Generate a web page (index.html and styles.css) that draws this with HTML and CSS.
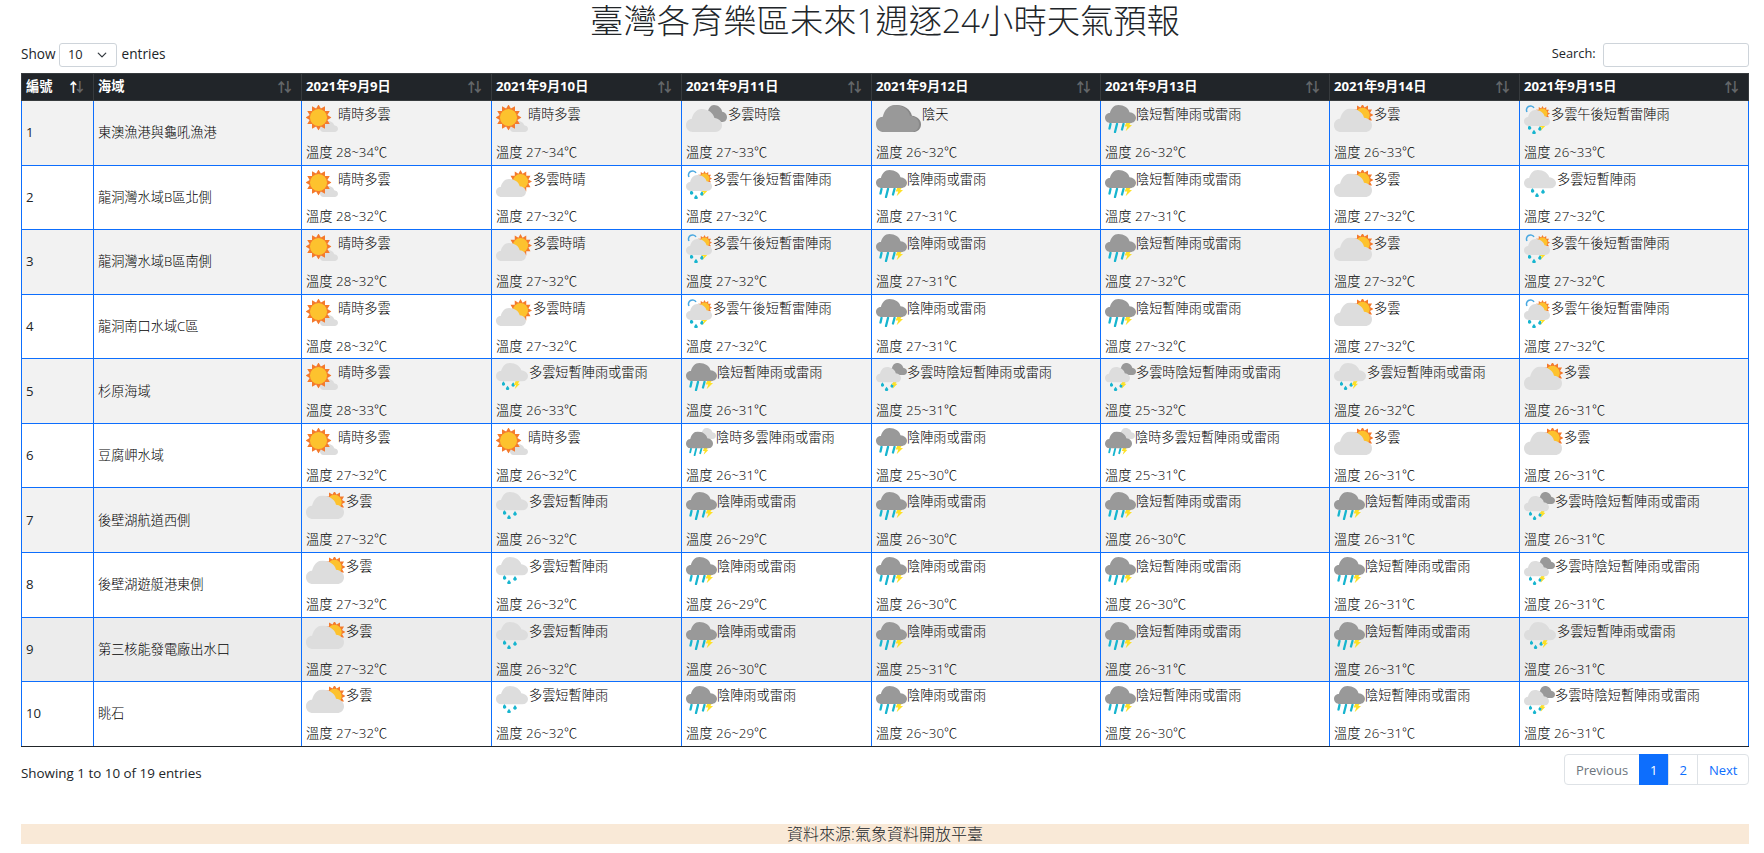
FILE: index.html
```html
<!DOCTYPE html>
<html lang="zh-Hant">
<head>
  <meta charset="UTF-8">
  <meta name="viewport" content="width=device-width, initial-scale=1.0">
  <title>臺灣各育樂區未來1週逐24小時天氣預報</title>
  <link rel="stylesheet" href="styles.css">
</head>
<body>
  <!-- weather icons, one symbol per forecast wording -->
  <svg class="sprite" xmlns="http://www.w3.org/2000/svg">
    <symbol id="cl" viewBox="0 0 38 24" preserveAspectRatio="none">
      <path d="M7 24C3 24 0 21 0 17C0 13 3 10.500 6 10.500C7.500 4.500 11 0 16.500 0C23 0 29 4 30 9.500C34.500 10 38 13 38 17C38 21 35 24 31 24Z"/>
    </symbol>
    <symbol id="star" viewBox="0 0 24 24">
      <polygon fill="#f47a2c" points="24,12 20.2,14.2 22.400,18 18,18 18,22.400 14.200,20.200 12,24 9.800,20.200 6,22.400 6,18 1.600,18 3.800,14.200 0,12 3.800,9.800 1.600,6 6,6 6,1.600 9.800,3.800 12,0 14.200,3.800 18,1.600 18,6 22.400,6 20.200,9.800"/>
      <circle cx="12" cy="12" r="7.900" fill="#fdc22e"/>
    </symbol>
    <symbol id="bolt" viewBox="0 0 8 9">
      <path fill="#fde026" d="M3 0H7.500L5.500 3H8L2 9L3.500 4.500H1Z"/>
    </symbol>
    <symbol id="streaks" viewBox="0 0 20 10">
      <path fill="none" stroke="#17b5cf" stroke-width="2.300" stroke-linecap="round" d="M2.500 1L1.500 5.500M9 1L7 9M15.500 1L14 6.500"/>
    </symbol>
    <symbol id="dots" viewBox="0 0 14 9">
      <g fill="#17b5cf">
        <path d="M1.500 0L3.200 2.400A1.800 1.800 0 1 1 -0.200 2.400Z"/>
        <path d="M6 4.800L7.700 7.200A1.800 1.800 0 1 1 4.300 7.200Z"/>
        <path d="M12 1L13.700 3.400A1.800 1.800 0 1 1 10.300 3.400Z"/>
      </g>
    </symbol>

    <symbol id="sun" viewBox="0 0 32 32">
      <use href="#cl" x="14" y="16" width="18" height="11" fill="#ddd"/>
      <use href="#star" x="-0.500" y="-0.500" width="26" height="26"/>
    </symbol>
    <symbol id="sunny-cloud" viewBox="0 0 37 32">
      <use href="#star" x="13" y="0" width="23" height="23"/>
      <use href="#cl" x="0" y="9" width="30" height="18" fill="#ddd"/>
    </symbol>
    <symbol id="cloud" viewBox="0 0 40 32">
      <use href="#star" x="17.500" y="-1" width="22" height="22"/>
      <use href="#cl" x="0" y="3.500" width="38" height="23.500" fill="#ddd"/>
    </symbol>
    <symbol id="cloud-over" viewBox="0 0 42 32">
      <use href="#cl" x="18" y="0" width="23" height="17" fill="#999"/>
      <use href="#cl" x="0" y="4" width="36" height="23" fill="#ddd"/>
    </symbol>
    <symbol id="over" viewBox="0 0 46 32">
      <use href="#cl" x="2" y="0" width="43" height="27" fill="#888"/>
      <use href="#cl" x="0" y="0" width="43" height="27" fill="#999"/>
    </symbol>
    <symbol id="rain" viewBox="0 0 31 32">
      <use href="#streaks" x="3" y="18" width="20" height="10"/>
      <use href="#bolt" x="18.500" y="16.500" width="8.500" height="10"/>
      <use href="#cl" x="0" y="0" width="31" height="18" fill="#999"/>
    </symbol>
    <symbol id="pm" viewBox="0 0 27 32">
      <path fill="none" stroke="#4aa8e0" stroke-width="1.500" d="M3 7A4 4 0 0 1 10 3"/>
      <use href="#star" x="11" y="1" width="15" height="15"/>
      <use href="#dots" x="4" y="20" width="14" height="9"/>
      <use href="#bolt" x="15" y="18" width="6.500" height="8"/>
      <use href="#cl" x="0" y="5" width="26" height="16" fill="#ddd"/>
    </symbol>
    <symbol id="shower" viewBox="0 0 33 32">
      <use href="#dots" x="7" y="18" width="14" height="9"/>
      <use href="#cl" x="0" y="0" width="32" height="18.500" fill="#ddd"/>
    </symbol>
    <symbol id="shower-t" viewBox="0 0 33 32">
      <use href="#dots" x="6" y="18" width="13" height="9"/>
      <use href="#bolt" x="17" y="17.500" width="7" height="9"/>
      <use href="#cl" x="0" y="0" width="32" height="18.500" fill="#ddd"/>
    </symbol>
    <symbol id="cloud-over-t" viewBox="0 0 31 32">
      <use href="#cl" x="13" y="0" width="18" height="12" fill="#999"/>
      <use href="#dots" x="5" y="19" width="13" height="9"/>
      <use href="#bolt" x="15" y="18" width="6.500" height="8"/>
      <use href="#cl" x="0" y="4" width="25" height="15.500" fill="#ddd"/>
    </symbol>
    <symbol id="over-cloud-t" viewBox="0 0 30 32">
      <use href="#cl" x="13" y="0" width="17" height="11" fill="#ddd"/>
      <use href="#streaks" x="3" y="20" width="16" height="8"/>
      <use href="#bolt" x="16" y="19" width="6.500" height="8"/>
      <use href="#cl" x="0" y="3.500" width="27" height="17" fill="#999"/>
    </symbol>
  </svg>

  <h1 class="page-title">臺灣各育樂區未來1週逐24小時天氣預報</h1>

  <div class="table-tools">
    <label class="length-box">Show <select class="length-select"><option>10</option></select> entries</label>
    <label class="search-box">Search: <input type="search" class="search-input"></label>
  </div>

  <table class="forecast">
    <colgroup>
      <col class="col-no"><col class="col-area">
      <col class="col-s"><col class="col-s"><col class="col-s">
      <col class="col-l"><col class="col-l">
      <col class="col-s"><col>
    </colgroup>
    <thead>
      <tr>
        <th class="sort-asc">編號</th>
        <th>海域</th>
        <th>2021年9月9日</th>
        <th>2021年9月10日</th>
        <th>2021年9月11日</th>
        <th>2021年9月12日</th>
        <th>2021年9月13日</th>
        <th>2021年9月14日</th>
        <th>2021年9月15日</th>
      </tr>
    </thead>
    <tbody>
      <tr class="odd">
        <td class="no">1</td><td>東澳漁港與龜吼漁港</td>
        <td><div class="wx"><svg class="ic w-sun"><use href="#sun"/></svg>晴時多雲</div><div class="tp">溫度 28~34℃</div></td>
        <td><div class="wx"><svg class="ic w-sun"><use href="#sun"/></svg>晴時多雲</div><div class="tp">溫度 27~34℃</div></td>
        <td><div class="wx"><svg class="ic w-cloud-over"><use href="#cloud-over"/></svg>多雲時陰</div><div class="tp">溫度 27~33℃</div></td>
        <td><div class="wx"><svg class="ic w-over"><use href="#over"/></svg>陰天</div><div class="tp">溫度 26~32℃</div></td>
        <td><div class="wx"><svg class="ic w-rain"><use href="#rain"/></svg>陰短暫陣雨或雷雨</div><div class="tp">溫度 26~32℃</div></td>
        <td><div class="wx"><svg class="ic w-cloud"><use href="#cloud"/></svg>多雲</div><div class="tp">溫度 26~33℃</div></td>
        <td><div class="wx"><svg class="ic w-pm"><use href="#pm"/></svg>多雲午後短暫雷陣雨</div><div class="tp">溫度 26~33℃</div></td>
      </tr>
      <tr>
        <td class="no">2</td><td>龍洞灣水域B區北側</td>
        <td><div class="wx"><svg class="ic w-sun"><use href="#sun"/></svg>晴時多雲</div><div class="tp">溫度 28~32℃</div></td>
        <td><div class="wx"><svg class="ic w-sunny-cloud"><use href="#sunny-cloud"/></svg>多雲時晴</div><div class="tp">溫度 27~32℃</div></td>
        <td><div class="wx"><svg class="ic w-pm"><use href="#pm"/></svg>多雲午後短暫雷陣雨</div><div class="tp">溫度 27~32℃</div></td>
        <td><div class="wx"><svg class="ic w-rain"><use href="#rain"/></svg>陰陣雨或雷雨</div><div class="tp">溫度 27~31℃</div></td>
        <td><div class="wx"><svg class="ic w-rain"><use href="#rain"/></svg>陰短暫陣雨或雷雨</div><div class="tp">溫度 27~31℃</div></td>
        <td><div class="wx"><svg class="ic w-cloud"><use href="#cloud"/></svg>多雲</div><div class="tp">溫度 27~32℃</div></td>
        <td><div class="wx"><svg class="ic w-shower"><use href="#shower"/></svg>多雲短暫陣雨</div><div class="tp">溫度 27~32℃</div></td>
      </tr>
      <tr class="odd">
        <td class="no">3</td><td>龍洞灣水域B區南側</td>
        <td><div class="wx"><svg class="ic w-sun"><use href="#sun"/></svg>晴時多雲</div><div class="tp">溫度 28~32℃</div></td>
        <td><div class="wx"><svg class="ic w-sunny-cloud"><use href="#sunny-cloud"/></svg>多雲時晴</div><div class="tp">溫度 27~32℃</div></td>
        <td><div class="wx"><svg class="ic w-pm"><use href="#pm"/></svg>多雲午後短暫雷陣雨</div><div class="tp">溫度 27~32℃</div></td>
        <td><div class="wx"><svg class="ic w-rain"><use href="#rain"/></svg>陰陣雨或雷雨</div><div class="tp">溫度 27~31℃</div></td>
        <td><div class="wx"><svg class="ic w-rain"><use href="#rain"/></svg>陰短暫陣雨或雷雨</div><div class="tp">溫度 27~32℃</div></td>
        <td><div class="wx"><svg class="ic w-cloud"><use href="#cloud"/></svg>多雲</div><div class="tp">溫度 27~32℃</div></td>
        <td><div class="wx"><svg class="ic w-pm"><use href="#pm"/></svg>多雲午後短暫雷陣雨</div><div class="tp">溫度 27~32℃</div></td>
      </tr>
      <tr>
        <td class="no">4</td><td>龍洞南口水域C區</td>
        <td><div class="wx"><svg class="ic w-sun"><use href="#sun"/></svg>晴時多雲</div><div class="tp">溫度 28~32℃</div></td>
        <td><div class="wx"><svg class="ic w-sunny-cloud"><use href="#sunny-cloud"/></svg>多雲時晴</div><div class="tp">溫度 27~32℃</div></td>
        <td><div class="wx"><svg class="ic w-pm"><use href="#pm"/></svg>多雲午後短暫雷陣雨</div><div class="tp">溫度 27~32℃</div></td>
        <td><div class="wx"><svg class="ic w-rain"><use href="#rain"/></svg>陰陣雨或雷雨</div><div class="tp">溫度 27~31℃</div></td>
        <td><div class="wx"><svg class="ic w-rain"><use href="#rain"/></svg>陰短暫陣雨或雷雨</div><div class="tp">溫度 27~32℃</div></td>
        <td><div class="wx"><svg class="ic w-cloud"><use href="#cloud"/></svg>多雲</div><div class="tp">溫度 27~32℃</div></td>
        <td><div class="wx"><svg class="ic w-pm"><use href="#pm"/></svg>多雲午後短暫雷陣雨</div><div class="tp">溫度 27~32℃</div></td>
      </tr>
      <tr class="odd">
        <td class="no">5</td><td>杉原海域</td>
        <td><div class="wx"><svg class="ic w-sun"><use href="#sun"/></svg>晴時多雲</div><div class="tp">溫度 28~33℃</div></td>
        <td><div class="wx"><svg class="ic w-shower"><use href="#shower-t"/></svg>多雲短暫陣雨或雷雨</div><div class="tp">溫度 26~33℃</div></td>
        <td><div class="wx"><svg class="ic w-rain"><use href="#rain"/></svg>陰短暫陣雨或雷雨</div><div class="tp">溫度 26~31℃</div></td>
        <td><div class="wx"><svg class="ic w-rain"><use href="#cloud-over-t"/></svg>多雲時陰短暫陣雨或雷雨</div><div class="tp">溫度 25~31℃</div></td>
        <td><div class="wx"><svg class="ic w-rain"><use href="#cloud-over-t"/></svg>多雲時陰短暫陣雨或雷雨</div><div class="tp">溫度 25~32℃</div></td>
        <td><div class="wx"><svg class="ic w-shower"><use href="#shower-t"/></svg>多雲短暫陣雨或雷雨</div><div class="tp">溫度 26~32℃</div></td>
        <td><div class="wx"><svg class="ic w-cloud"><use href="#cloud"/></svg>多雲</div><div class="tp">溫度 26~31℃</div></td>
      </tr>
      <tr>
        <td class="no">6</td><td>豆腐岬水域</td>
        <td><div class="wx"><svg class="ic w-sun"><use href="#sun"/></svg>晴時多雲</div><div class="tp">溫度 27~32℃</div></td>
        <td><div class="wx"><svg class="ic w-sun"><use href="#sun"/></svg>晴時多雲</div><div class="tp">溫度 26~32℃</div></td>
        <td><div class="wx"><svg class="ic w-over-cloud"><use href="#over-cloud-t"/></svg>陰時多雲陣雨或雷雨</div><div class="tp">溫度 26~31℃</div></td>
        <td><div class="wx"><svg class="ic w-rain"><use href="#rain"/></svg>陰陣雨或雷雨</div><div class="tp">溫度 25~30℃</div></td>
        <td><div class="wx"><svg class="ic w-over-cloud"><use href="#over-cloud-t"/></svg>陰時多雲短暫陣雨或雷雨</div><div class="tp">溫度 25~31℃</div></td>
        <td><div class="wx"><svg class="ic w-cloud"><use href="#cloud"/></svg>多雲</div><div class="tp">溫度 26~31℃</div></td>
        <td><div class="wx"><svg class="ic w-cloud"><use href="#cloud"/></svg>多雲</div><div class="tp">溫度 26~31℃</div></td>
      </tr>
      <tr class="odd">
        <td class="no">7</td><td>後壁湖航道西側</td>
        <td><div class="wx"><svg class="ic w-cloud"><use href="#cloud"/></svg>多雲</div><div class="tp">溫度 27~32℃</div></td>
        <td><div class="wx"><svg class="ic w-shower"><use href="#shower"/></svg>多雲短暫陣雨</div><div class="tp">溫度 26~32℃</div></td>
        <td><div class="wx"><svg class="ic w-rain"><use href="#rain"/></svg>陰陣雨或雷雨</div><div class="tp">溫度 26~29℃</div></td>
        <td><div class="wx"><svg class="ic w-rain"><use href="#rain"/></svg>陰陣雨或雷雨</div><div class="tp">溫度 26~30℃</div></td>
        <td><div class="wx"><svg class="ic w-rain"><use href="#rain"/></svg>陰短暫陣雨或雷雨</div><div class="tp">溫度 26~30℃</div></td>
        <td><div class="wx"><svg class="ic w-rain"><use href="#rain"/></svg>陰短暫陣雨或雷雨</div><div class="tp">溫度 26~31℃</div></td>
        <td><div class="wx"><svg class="ic w-rain"><use href="#cloud-over-t"/></svg>多雲時陰短暫陣雨或雷雨</div><div class="tp">溫度 26~31℃</div></td>
      </tr>
      <tr>
        <td class="no">8</td><td>後壁湖遊艇港東側</td>
        <td><div class="wx"><svg class="ic w-cloud"><use href="#cloud"/></svg>多雲</div><div class="tp">溫度 27~32℃</div></td>
        <td><div class="wx"><svg class="ic w-shower"><use href="#shower"/></svg>多雲短暫陣雨</div><div class="tp">溫度 26~32℃</div></td>
        <td><div class="wx"><svg class="ic w-rain"><use href="#rain"/></svg>陰陣雨或雷雨</div><div class="tp">溫度 26~29℃</div></td>
        <td><div class="wx"><svg class="ic w-rain"><use href="#rain"/></svg>陰陣雨或雷雨</div><div class="tp">溫度 26~30℃</div></td>
        <td><div class="wx"><svg class="ic w-rain"><use href="#rain"/></svg>陰短暫陣雨或雷雨</div><div class="tp">溫度 26~30℃</div></td>
        <td><div class="wx"><svg class="ic w-rain"><use href="#rain"/></svg>陰短暫陣雨或雷雨</div><div class="tp">溫度 26~31℃</div></td>
        <td><div class="wx"><svg class="ic w-rain"><use href="#cloud-over-t"/></svg>多雲時陰短暫陣雨或雷雨</div><div class="tp">溫度 26~31℃</div></td>
      </tr>
      <tr class="odd hovered">
        <td class="no">9</td><td>第三核能發電廠出水口</td>
        <td><div class="wx"><svg class="ic w-cloud"><use href="#cloud"/></svg>多雲</div><div class="tp">溫度 27~32℃</div></td>
        <td><div class="wx"><svg class="ic w-shower"><use href="#shower"/></svg>多雲短暫陣雨</div><div class="tp">溫度 26~32℃</div></td>
        <td><div class="wx"><svg class="ic w-rain"><use href="#rain"/></svg>陰陣雨或雷雨</div><div class="tp">溫度 26~30℃</div></td>
        <td><div class="wx"><svg class="ic w-rain"><use href="#rain"/></svg>陰陣雨或雷雨</div><div class="tp">溫度 25~31℃</div></td>
        <td><div class="wx"><svg class="ic w-rain"><use href="#rain"/></svg>陰短暫陣雨或雷雨</div><div class="tp">溫度 26~31℃</div></td>
        <td><div class="wx"><svg class="ic w-rain"><use href="#rain"/></svg>陰短暫陣雨或雷雨</div><div class="tp">溫度 26~31℃</div></td>
        <td><div class="wx"><svg class="ic w-shower"><use href="#shower-t"/></svg>多雲短暫陣雨或雷雨</div><div class="tp">溫度 26~31℃</div></td>
      </tr>
      <tr>
        <td class="no">10</td><td>眺石</td>
        <td><div class="wx"><svg class="ic w-cloud"><use href="#cloud"/></svg>多雲</div><div class="tp">溫度 27~32℃</div></td>
        <td><div class="wx"><svg class="ic w-shower"><use href="#shower"/></svg>多雲短暫陣雨</div><div class="tp">溫度 26~32℃</div></td>
        <td><div class="wx"><svg class="ic w-rain"><use href="#rain"/></svg>陰陣雨或雷雨</div><div class="tp">溫度 26~29℃</div></td>
        <td><div class="wx"><svg class="ic w-rain"><use href="#rain"/></svg>陰陣雨或雷雨</div><div class="tp">溫度 26~30℃</div></td>
        <td><div class="wx"><svg class="ic w-rain"><use href="#rain"/></svg>陰短暫陣雨或雷雨</div><div class="tp">溫度 26~30℃</div></td>
        <td><div class="wx"><svg class="ic w-rain"><use href="#rain"/></svg>陰短暫陣雨或雷雨</div><div class="tp">溫度 26~31℃</div></td>
        <td><div class="wx"><svg class="ic w-rain"><use href="#cloud-over-t"/></svg>多雲時陰短暫陣雨或雷雨</div><div class="tp">溫度 26~31℃</div></td>
      </tr>
    </tbody>
  </table>

  <div class="table-foot">
    <div class="table-info">Showing 1 to 10 of 19 entries</div>
    <ul class="pagination">
      <li class="page-item disabled"><a href="#">Previous</a></li>
      <li class="page-item active"><a href="#">1</a></li>
      <li class="page-item"><a href="#">2</a></li>
      <li class="page-item"><a href="#">Next</a></li>
    </ul>
  </div>

  <div class="source">資料來源:氣象資料開放平臺</div>
</body>
</html>
```

FILE: styles.css
```css
* {
  box-sizing: border-box;
}
body {
  margin: 0;
  padding: 0 15px 0 21px;
  font-family: "Open Sans", "Noto Sans CJK TC", sans-serif;
  font-size: 13.2px;
  line-height: 19.2px;
  color: #212529;
  background-color: #fff;
}
.sprite {
  display: none;
}
.page-title {
  margin: 0;
  font-size: 33.3px;
  font-weight: 300;
  line-height: 40px;
  text-align: center;
}
.table-tools {
  display: flex;
  justify-content: space-between;
  align-items: center;
  height: 24px;
  margin: 3px 0 6px;
}
.length-box {
  font-size: 13.6px;
}
.length-select {
  width: 58px;
  height: 24px;
  margin: 0 1px 0 0;
  padding: 0 20px 0 8px;
  font: inherit;
  font-size: 12.8px;
  color: #212529;
  border: 1px solid #ced4da;
  border-radius: 3px;
  appearance: none;
  background: #fff url("data:image/svg+xml,%3csvg xmlns='http://www.w3.org/2000/svg' viewBox='0 0 16 16'%3e%3cpath fill='none' stroke='%23343a40' stroke-linecap='round' stroke-linejoin='round' stroke-width='2' d='M2 5l6 6 6-6'/%3e%3c/svg%3e") no-repeat right 8px center / 12px 10px;
}
.search-box {
  font-size: 12.8px;
}
.search-input {
  width: 146px;
  height: 24px;
  margin-left: 4px;
  border: 1px solid #ced4da;
  border-radius: 3px;
  vertical-align: middle;
}
.forecast {
  width: 100%;
  table-layout: fixed;
  border-collapse: collapse;
  font-weight: 300;
}
.col-no { width: 72px; }
.col-area { width: 208px; }
.col-s { width: 190px; }
.col-l { width: 229px; }
.forecast th {
  position: relative;
  height: 27px;
  padding: 3px 4px;
  font-weight: 700;
  text-align: left;
  color: #fff;
  background-color: #212529;
  border: 1px solid #373b3e;
}
/* sort arrows */
.forecast th::before,
.forecast th::after {
  position: absolute;
  bottom: 3px;
  opacity: 0.3;
}
.forecast th::before {
  content: "↑";
  right: 1em;
}
.forecast th::after {
  content: "↓";
  right: 0.5em;
}
.forecast th.sort-asc::before {
  opacity: 1;
}
.forecast td {
  padding: 4px;
  vertical-align: middle;
  color: #000;
  border: 1px solid #0d6efd;
}
.forecast td.no {
  font-weight: 400;
  color: #212529;
}
.forecast tr:last-child td {
  border-bottom-color: #212529;
}
.forecast tr.odd td {
  background-color: #f2f2f2;
}
.forecast tr.hovered td {
  background-color: #ececec;
}
.wx {
  display: flex;
  align-items: flex-start;
  height: 37.900px;
}
.ic {
  flex: none;
  height: 32px;
}
.tp {
  height: 17.700px;
  font-size: 13.3px;
}
.w-sun { width: 32px; }
.w-sunny-cloud { width: 37px; }
.w-cloud { width: 40px; }
.w-cloud-over { width: 42px; }
.w-over { width: 46px; }
.w-rain { width: 31px; }
.w-pm { width: 27px; }
.w-shower { width: 33px; }
.w-over-cloud { width: 30px; }
.table-foot {
  display: flex;
  justify-content: space-between;
  margin-top: 7px;
}
.table-info {
  padding-top: 10px;
  font-size: 13.400px;
}
.pagination {
  display: flex;
  margin: 0;
  padding: 0;
  list-style: none;
}
.page-item a {
  display: block;
  height: 31px;
  margin-left: -1px;
  padding: 5px 10.500px;
  font-size: 13px;
  line-height: 20px;
  color: #0d6efd;
  text-decoration: none;
  border: 1px solid #dee2e6;
}
.page-item:first-child a {
  border-radius: 4px 0 0 4px;
}
.page-item:last-child a {
  border-radius: 0 4px 4px 0;
}
.page-item.disabled a {
  color: #6c757d;
}
.page-item.active a {
  color: #fff;
  background-color: #0d6efd;
  border-color: #0d6efd;
}
.source {
  height: 20px;
  margin-top: 39px;
  font-size: 16px;
  font-weight: 300;
  line-height: 20px;
  text-align: center;
  background-color: #f9e9d7;
}
```
